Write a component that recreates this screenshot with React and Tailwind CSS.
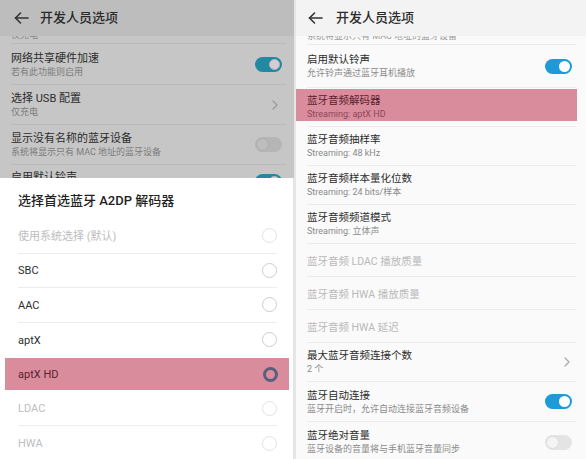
import React from "react";

const Arrow = ({ color }) => (
  <svg width="15" height="12" viewBox="0 0 15 12" fill="none" stroke={color} strokeWidth="1.6" strokeLinecap="round" strokeLinejoin="round">
    <path d="M1.5 6H14" />
    <path d="M6.5 1L1.5 6L6.5 11" />
  </svg>
);

const Chevron = ({ color }) => (
  <svg width="6" height="10" viewBox="0 0 6 10" fill="none" stroke={color} strokeWidth="1.2" strokeLinecap="round" strokeLinejoin="round">
    <path d="M1 1L5 5L1 9" />
  </svg>
);

const Toggle = ({ on, dim }) => {
  if (dim) {
    return on ? (
      <div className="w-[27px] h-[15px] rounded-full bg-[#2189a2] flex items-center justify-end pr-[2px]">
        <div className="w-[11px] h-[11px] rounded-full bg-[#d6ccd3] border border-[#c0b3bd]" />
      </div>
    ) : (
      <div className="w-[27px] h-[15px] rounded-full bg-[#b5b5b5] flex items-center pl-[1px]">
        <div className="w-[13px] h-[13px] rounded-full bg-[#bdbdbd] border border-[#adadad]" />
      </div>
    );
  }
  return on ? (
    <div className="w-[27px] h-[15px] rounded-full bg-[#1c9bd8] flex items-center justify-end pr-[2px]">
      <div className="w-[11px] h-[11px] rounded-full bg-white" />
    </div>
  ) : (
    <div className="w-[27px] h-[15px] rounded-full bg-[#e4e4e4] flex items-center pl-[1px]">
      <div className="w-[13px] h-[13px] rounded-full bg-[#f4f4f4] border border-[#dddddd]" />
    </div>
  );
};

const LeftRow = ({ h, title, sub, right }) => (
  <div className={`${h} flex items-center justify-between border-b border-[#b9b9b9] shrink-0`}>
    <div className="flex flex-col pt-[1px]">
      <div className="text-[11px] leading-[14px] text-[#2c2c2c]">{title}</div>
      <div className="text-[9px] leading-[12px] text-[#7c7c7c]">{sub}</div>
    </div>
    <div className="flex items-center pr-[4px]">{right}</div>
  </div>
);

const Option = ({ label, disabled, selected, last }) =>
  selected ? (
    <div className="h-[34.5px] shrink-0 flex items-center">
      <div className="ml-[5px] mr-[4px] flex-1 h-[32px] bg-[#d98c9c] flex items-center justify-between pl-[13px] pr-[11px]">
        <span className="text-[11px] pt-[2px] text-[#5e1f31]">{label}</span>
        <div className="w-[15px] h-[15px] rounded-full border-[3px] border-[#5a5f7d]" />
      </div>
    </div>
  ) : (
    <div className="h-[34.5px] shrink-0 px-[18px] pr-[16px]">
      <div className={`h-full flex items-center justify-between ${last ? "" : "border-b border-[#ededed]"}`}>
        <span className={`text-[11px] pt-[2px] ${disabled ? "text-[#bdbdbd]" : "text-[#2e2e2e]"}`}>{label}</span>
        <div className={`w-[15px] h-[15px] rounded-full border ${disabled ? "border-[#e2e2e2]" : "border-[#cdcdcd]"}`} />
      </div>
    </div>
  );

const Left = () => (
  <div className="w-[294px] h-full flex flex-col bg-[#c6c6c6] overflow-hidden shrink-0">
    <div className="h-[36px] shrink-0 bg-[#bdbdbd] flex items-center pl-[14px]">
      <Arrow color="#333333" />
      <span className="ml-[11px] text-[13px] font-medium text-[#2a2a2a]">开发人员选项</span>
    </div>
    <div className="flex flex-col px-[11px] pr-[8px]">
      <div className="h-[8px] shrink-0 overflow-hidden border-b border-[#b9b9b9]">
        <div className="-mt-[7px] text-[9px] leading-[12px] text-[#8a8a8a]">仅充电</div>
      </div>
      <LeftRow h="h-[41px]" title="网络共享硬件加速" sub="若有此功能则启用" right={<Toggle on dim />} />
      <LeftRow h="h-[40px]" title="选择 USB 配置" sub="仅充电" right={<div className="pr-[4px]"><Chevron color="#9a9a9a" /></div>} />
      <LeftRow h="h-[40px]" title="显示没有名称的蓝牙设备" sub="系统将显示只有 MAC 地址的蓝牙设备" right={<Toggle dim />} />
      <div className="h-[13px] shrink-0 overflow-hidden flex justify-between">
        <div className="pt-[6px] text-[11px] leading-[14px] text-[#2c2c2c]">启用默认铃声</div>
        <div className="pt-[9px] pr-[4px]"><Toggle on dim /></div>
      </div>
    </div>
    <div className="flex-1 bg-white flex flex-col border-r border-[#e3e3e3] overflow-hidden">
      <div className="h-[41px] shrink-0 flex items-center pl-[18px] pt-[4px]">
        <span className="text-[13px] font-medium text-[#222222]">选择首选蓝牙 A2DP 解码器</span>
      </div>
      <Option label="使用系统选择 (默认)" disabled />
      <Option label="SBC" />
      <Option label="AAC" />
      <Option label="aptX" last />
      <Option label="aptX HD" selected />
      <Option label="LDAC" disabled />
      <Option label="HWA" disabled last />
    </div>
  </div>
);

const RightRow = ({ h, title, sub, right, disabled, highlight, last }) => (
  <div className={`${h} relative shrink-0 flex items-center justify-between ${last ? "" : "border-b border-[#ececec]"}`}>
    {highlight && <div className="absolute -left-[12px] -right-[1px] top-[1px] h-[32px] bg-[#d98c9c]" />}
    <div className="relative flex flex-col">
      <div className={`text-[10.5px] leading-[14px] ${disabled ? "text-[#b9b9b9] pt-[3px]" : highlight ? "text-[#5a1d2f]" : "text-[#2c2c2c]"}`}>{title}</div>
      {sub && <div className={`text-[9px] leading-[12px] ${highlight ? "text-[#8d4658]" : "text-[#8a8a8a]"}`}>{sub}</div>}
    </div>
    {right && <div className="relative flex items-center pr-[4px]">{right}</div>}
  </div>
);

const Right = () => (
  <div className="flex-1 h-full flex flex-col bg-[#fafafa] border-l-2 border-[#e6e6e6] overflow-hidden">
    <div className="h-[36px] shrink-0 bg-[#f3f3f3] flex items-center pl-[12px]">
      <Arrow color="#333333" />
      <span className="ml-[13px] text-[13px] font-medium text-[#2a2a2a]">开发人员选项</span>
    </div>
    <div className="flex flex-col pl-[11px] pr-[10px]">
      <div className="h-[9px] shrink-0 overflow-hidden border-b border-[#ececec]">
        <div className="-mt-[6px] text-[9px] leading-[12px] text-[#9a9a9a]">系统将显示只有 MAC 地址的蓝牙设备</div>
      </div>
      <RightRow h="h-[43px]" title="启用默认铃声" sub="允许铃声通过蓝牙耳机播放" right={<Toggle on />} />
      <RightRow h="h-[39px]" title="蓝牙音频解码器" sub="Streaming: aptX HD" highlight />
      <RightRow h="h-[39px]" title="蓝牙音频抽样率" sub="Streaming: 48 kHz" />
      <RightRow h="h-[39px]" title="蓝牙音频样本量化位数" sub="Streaming: 24 bits/样本" />
      <RightRow h="h-[39px]" title="蓝牙音频频道模式" sub="Streaming: 立体声" />
      <RightRow h="h-[33px]" title="蓝牙音频 LDAC 播放质量" disabled />
      <RightRow h="h-[33px]" title="蓝牙音频 HWA 播放质量" disabled />
      <RightRow h="h-[33px]" title="蓝牙音频 HWA 延迟" disabled />
      <RightRow h="h-[39px]" title="最大蓝牙音频连接个数" sub="2 个" right={<div className="pr-[2px]"><Chevron color="#a8a8a8" /></div>} />
      <RightRow h="h-[40px]" title="蓝牙自动连接" sub="蓝牙开启时，允许自动连接蓝牙音频设备" right={<Toggle on />} />
      <RightRow h="h-[40px]" title="蓝牙绝对音量" sub="蓝牙设备的音量将与手机蓝牙音量同步" right={<Toggle />} last />
    </div>
  </div>
);

export default function App() {
  return (
    <div className="flex w-[586px] h-[459px] overflow-hidden bg-white font-['Roboto','Noto_Sans_CJK_SC',sans-serif]">
      <Left />
      <Right />
    </div>
  );
}
